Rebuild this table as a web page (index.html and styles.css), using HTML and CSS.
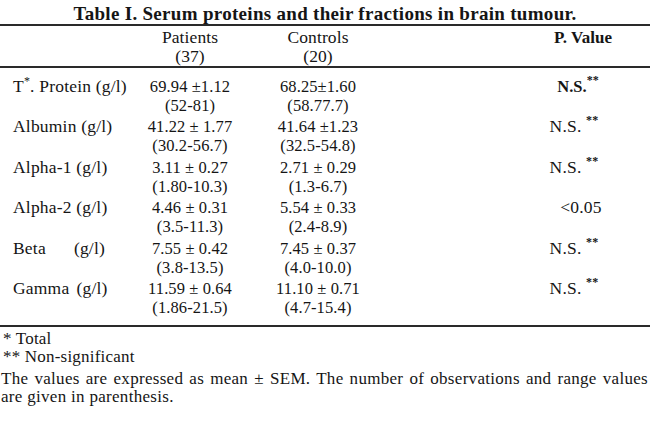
FILE: index.html
```html
<!DOCTYPE html>
<html>
<head>
<meta charset="utf-8">
<link rel="stylesheet" href="styles.css">
</head>
<body>
<div class="page">
  <h1 class="title">Table I. Serum proteins and their fractions in brain tumour.</h1>
  <div class="table">
    <div class="head">
      <div class="cell label"></div>
      <div class="cell num"><div>Patients</div><div>(37)</div></div>
      <div class="cell num"><div>Controls</div><div>(20)</div></div>
      <div class="cell ph">P. Value</div>
    </div>
    <div class="body">
      <div class="row">
        <div class="cell label">T<sup class="star">*</sup>. Protein (g/l)</div>
        <div class="cell num"><div>69.94 ±1.12</div><div>(52-81)</div></div>
        <div class="cell num"><div>68.25±1.60</div><div>(58.77.7)</div></div>
        <div class="cell p first">N.S.<sup class="ss">**</sup></div>
      </div>
      <div class="row">
        <div class="cell label">Albumin (g/l)</div>
        <div class="cell num"><div>41.22 ± 1.77</div><div>(30.2-56.7)</div></div>
        <div class="cell num"><div>41.64 ±1.23</div><div>(32.5-54.8)</div></div>
        <div class="cell p">N.S. <sup class="ss">**</sup></div>
      </div>
      <div class="row">
        <div class="cell label">Alpha-1 (g/l)</div>
        <div class="cell num"><div>3.11 ± 0.27</div><div>(1.80-10.3)</div></div>
        <div class="cell num"><div>2.71 ± 0.29</div><div>(1.3-6.7)</div></div>
        <div class="cell p">N.S. <sup class="ss">**</sup></div>
      </div>
      <div class="row">
        <div class="cell label">Alpha-2 (g/l)</div>
        <div class="cell num"><div>4.46 ± 0.31</div><div>(3.5-11.3)</div></div>
        <div class="cell num"><div>5.54 ± 0.33</div><div>(2.4-8.9)</div></div>
        <div class="cell p lt">&lt;0.05</div>
      </div>
      <div class="row">
        <div class="cell label">Beta<span class="gap-wide">(g/l)</span></div>
        <div class="cell num"><div>7.55 ± 0.42</div><div>(3.8-13.5)</div></div>
        <div class="cell num"><div>7.45 ± 0.37</div><div>(4.0-10.0)</div></div>
        <div class="cell p">N.S. <sup class="ss">**</sup></div>
      </div>
      <div class="row">
        <div class="cell label">Gamma<span class="gap">(g/l)</span></div>
        <div class="cell num"><div>11.59 ± 0.64</div><div>(1.86-21.5)</div></div>
        <div class="cell num"><div>11.10 ± 0.71</div><div>(4.7-15.4)</div></div>
        <div class="cell p">N.S. <sup class="ss">**</sup></div>
      </div>
    </div>
  </div>
  <div class="notes">
    <div class="note">* Total</div>
    <div class="note">** Non-significant</div>
    <p class="para"><span class="line1">The values are expressed as mean ± SEM. The number of observations and range values</span> are given in parenthesis.</p>
  </div>
</div>
</body>
</html>
```

FILE: styles.css
```css
html, body {
  margin: 0;
  padding: 0;
  background: #ffffff;
}

body {
  font-family: "Liberation Serif", "Times New Roman", serif;
  color: #151515;
  font-size: 17.5px;
  letter-spacing: 0.2px;
}

.page {
  width: 650px;
}

.title {
  margin: 0;
  padding-top: 4px;
  font-size: 19px;
  letter-spacing: 0.3px;
  line-height: 20px;
  font-weight: bold;
  text-align: center;
}

.table {
  border-top: 2px solid #2a2a2a;
  border-bottom: 2px solid #2a2a2a;
}

.head,
.row {
  display: grid;
  grid-template-columns: 128px 124px 132px 1fr;
  line-height: 19px;
}

.head {
  padding-top: 2px;
  border-bottom: 2px solid #2a2a2a;
}

.body {
  display: flex;
  flex-direction: column;
  gap: 2.4px;
  padding-top: 9px;
  padding-bottom: 8px;
}

.cell.label {
  padding-left: 13px;
  white-space: nowrap;
}

.cell.num {
  text-align: center;
  white-space: nowrap;
  font-size: 16.5px;
  letter-spacing: 0.1px;
}

.head .cell.num {
  font-size: 17.5px;
}

.cell.ph {
  padding-left: 132px;
  text-align: center;
  white-space: nowrap;
  font-weight: bold;
  font-size: 17px;
  letter-spacing: 0;
}

.cell.p {
  padding-left: 114px;
  text-align: center;
  white-space: nowrap;
}

.cell.p.first {
  padding-left: 122px;
  font-weight: bold;
  font-size: 16.5px;
  letter-spacing: 0;
}

.cell.p.lt {
  padding-left: 128px;
}

.star {
  font-size: 12px;
  line-height: 0;
  vertical-align: 7px;
}

.ss {
  font-size: 12px;
  font-weight: bold;
  line-height: 0;
  vertical-align: 8px;
}

.gap-wide {
  margin-left: 28px;
}

.gap {
  margin-left: 7px;
}

.notes {
  padding-top: 3px;
  font-size: 17px;
}

.note {
  padding-left: 3px;
  line-height: 18px;
}

.para {
  margin: 4px 0 0 0;
  padding-left: 1px;
  width: 647px;
  line-height: 18px;
  letter-spacing: 0.3px;
}

.line1 {
  display: block;
  text-align: justify;
  text-align-last: justify;
}
```
